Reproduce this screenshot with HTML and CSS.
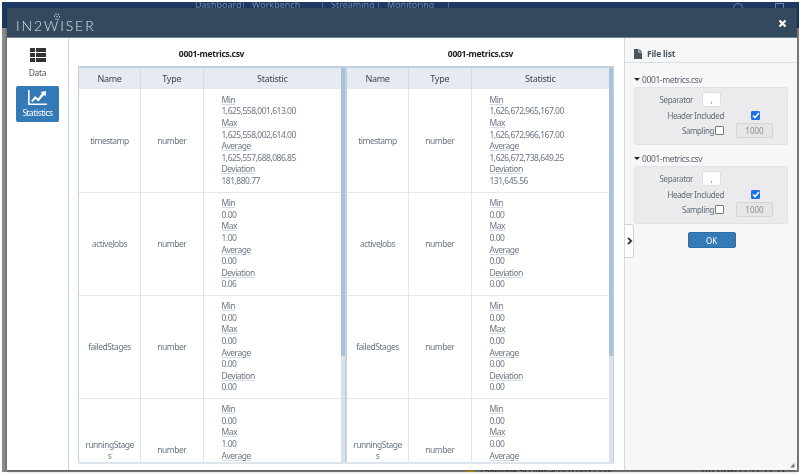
FILE: index.html

```html
<!DOCTYPE html>
<html>
  <head>
    <title>IN2WISER</title>
    <link rel="stylesheet" href="styles.css">
  </head>
  <body>
    <div class="screen">
      <div class="backdrop">
        <div class="top-nav">
          <span>Dashboard</span><span>Workbench</span><span>Streaming</span><span>Monitoring</span>
          <i class="nav-user"></i><i class="nav-box"></i>
        </div>
        <div class="back-body">
          <div class="back-row"><i class="back-folder"></i><span class="back-file">1586489c5cc4e4acdf2c0031.csv</span><span>2021/08/17 17:17:21</span></div>
        </div>
      </div>

      <div class="modal">
        <div class="modal-head">
          <div class="logo">
            <svg class="logo-dots" width="9" height="8" viewBox="0 0 9 8"><circle cx="4" cy="1" r=".7"/><circle cx="6.5" cy="1.5" r=".7"/><circle cx="2.5" cy="3" r=".7"/><circle cx="5" cy="3.5" r=".7"/><circle cx="7.5" cy="4" r=".7"/><circle cx="4" cy="6" r=".7"/><circle cx="6" cy="6.5" r=".7"/></svg>
            IN2WISER
          </div>
          <svg class="close-icon" width="9" height="9" viewBox="0 0 9 9"><path d="M1.5 1.5l6 6M7.5 1.5l-6 6"/></svg>
        </div>

        <div class="modal-body">
          <div class="sidebar">
            <div class="side-item">
              <svg width="16" height="14" viewBox="0 0 16 14"><path d="M0 0h5v4H0zM6 0h10v4H6zM0 5h5v4H0zM6 5h10v4H6zM0 10h5v4H0zM6 10h10v4H6z"/></svg>
              <span>Data</span>
            </div>
            <div class="side-item active">
              <svg width="19" height="15" viewBox="0 0 19 15"><path d="M0 0h1.6v13.4H19V15H0z"/><path d="M3 11l4-5 3 2.6 4-5.3-1.6-1.3L18 1l-.4 5.2-1.6-1.3-5.6 6.6-3-2.6-2.8 3.1z"/></svg>
              <span>Statistics</span>
            </div>
          </div>

          <div class="main">
            <div class="titles">
              <div>0001-metrics.csv</div>
              <div>0001-metrics.csv</div>
            </div>
            <div class="tables">
              <div class="table-wrap">
                <table>
                  <thead>
                    <tr><th>Name</th><th>Type</th><th>Statistic</th></tr>
                  </thead>
                  <tbody>
                    <tr>
                      <td>timestamp</td><td>number</td>
                      <td class="stat"><u>Min</u><br>1,625,558,001,613.00<br><u>Max</u><br>1,625,558,002,614.00<br><u>Average</u><br>1,625,557,688,086.85<br><u>Deviation</u><br>181,880.77</td>
                    </tr>
                    <tr>
                      <td>activeJobs</td><td>number</td>
                      <td class="stat"><u>Min</u><br>0.00<br><u>Max</u><br>1.00<br><u>Average</u><br>0.00<br><u>Deviation</u><br>0.06</td>
                    </tr>
                    <tr>
                      <td>failedStages</td><td>number</td>
                      <td class="stat"><u>Min</u><br>0.00<br><u>Max</u><br>0.00<br><u>Average</u><br>0.00<br><u>Deviation</u><br>0.00</td>
                    </tr>
                    <tr>
                      <td>runningStage<br>s</td><td>number</td>
                      <td class="stat"><u>Min</u><br>0.00<br><u>Max</u><br>1.00<br><u>Average</u><br>0.00<br><u>Deviation</u><br>0.04</td>
                    </tr>
                  </tbody>
                </table>
                <div class="scroll-thumb"></div>
              </div>
              <div class="table-wrap">
                <table>
                  <thead>
                    <tr><th>Name</th><th>Type</th><th>Statistic</th></tr>
                  </thead>
                  <tbody>
                    <tr>
                      <td>timestamp</td><td>number</td>
                      <td class="stat"><u>Min</u><br>1,626,672,965,167.00<br><u>Max</u><br>1,626,672,966,167.00<br><u>Average</u><br>1,626,672,738,649.25<br><u>Deviation</u><br>131,645.56</td>
                    </tr>
                    <tr>
                      <td>activeJobs</td><td>number</td>
                      <td class="stat"><u>Min</u><br>0.00<br><u>Max</u><br>0.00<br><u>Average</u><br>0.00<br><u>Deviation</u><br>0.00</td>
                    </tr>
                    <tr>
                      <td>failedStages</td><td>number</td>
                      <td class="stat"><u>Min</u><br>0.00<br><u>Max</u><br>0.00<br><u>Average</u><br>0.00<br><u>Deviation</u><br>0.00</td>
                    </tr>
                    <tr>
                      <td>runningStage<br>s</td><td>number</td>
                      <td class="stat"><u>Min</u><br>0.00<br><u>Max</u><br>0.00<br><u>Average</u><br>0.00<br><u>Deviation</u><br>0.00</td>
                    </tr>
                  </tbody>
                </table>
                <div class="scroll-thumb"></div>
              </div>
            </div>
          </div>

          <div class="panel">
            <div class="panel-toggle">
              <svg width="6" height="8" viewBox="0 0 6 8"><path d="M1 .8L4.2 4 1 7.2"/></svg>
            </div>
            <div class="panel-head">
              <svg width="8" height="10" viewBox="0 0 8 10"><path d="M0 0h4.5v3.5H8V10H0zM5.3 0L8 2.7H5.3z"/></svg>
              File list
            </div>
            <div class="panel-body">
              <div class="file-name"><i class="caret"></i>0001-metrics.csv</div>
              <div class="file-box">
                <div class="opt-row"><label>Separator</label><span class="sep-input">,</span></div>
                <div class="opt-row header-row"><label>Header Included</label><span class="check on">
                  <svg width="8" height="7" viewBox="0 0 8 7"><path d="M1 3.5l2 2 4-4.5"/></svg>
                </span></div>
                <div class="opt-row sample-row"><label>Sampling</label><span class="check"></span><span class="num-input">1000</span></div>
              </div>
              <div class="file-name"><i class="caret"></i>0001-metrics.csv</div>
              <div class="file-box">
                <div class="opt-row"><label>Separator</label><span class="sep-input">,</span></div>
                <div class="opt-row header-row"><label>Header Included</label><span class="check on">
                  <svg width="8" height="7" viewBox="0 0 8 7"><path d="M1 3.5l2 2 4-4.5"/></svg>
                </span></div>
                <div class="opt-row sample-row"><label>Sampling</label><span class="check"></span><span class="num-input">1000</span></div>
              </div>
              <button type="button" class="ok-btn">OK</button>
            </div>
            <svg class="resize-grip" width="6" height="6" viewBox="0 0 6 6"><path d="M5.5 1v4.5H1z"/></svg>
          </div>
        </div>
      </div>
    </div>
  </body>
</html>
```

FILE: styles.css

```css
body {
  margin: 0;
  background-color: #fff;
  font-family: "Noto Sans", sans-serif;
}

.screen {
  position: relative;
  width: 802px;
  height: 476px;
  overflow: hidden;
  background-color: #fff;
  filter: blur(0.35px);
}

/* page behind the modal */
.backdrop {
  position: absolute;
  left: 2px;
  top: 2px;
  width: 797px;
  height: 470px;
  display: flex;
  flex-direction: column;
  background-color: #8c8c8c;
}

.top-nav {
  height: 26px;
  background-color: #1d3a63;
  color: #6f86a6;
  font-size: 9px;
  line-height: 6px;
  display: flex;
  padding-left: 193px;
  overflow: hidden;
}

.top-nav span {
  box-sizing: border-box;
  padding-left: 8px;
  border-right: 1px solid #4d6589;
}

.top-nav span:nth-child(1) {
  width: 49px;
  padding-left: 0;
}

.top-nav span:nth-child(2) {
  width: 79px;
}

.top-nav span:nth-child(3) {
  width: 56px;
}

.top-nav span:nth-child(4) {
  width: 70px;
}

.nav-user {
  width: 8px;
  height: 8px;
  margin: 1px 0 0 284px;
  border: 1px solid #6f86a6;
  border-radius: 50%;
}

.nav-box {
  width: 7px;
  height: 8px;
  margin: 1px 0 0 32px;
  border: 1px solid #6f86a6;
}

.back-body {
  flex: 1;
  position: relative;
  overflow: hidden;
}

.back-row {
  position: absolute;
  left: 464px;
  bottom: -3px;
  display: flex;
  font-size: 9px;
  line-height: 9px;
  color: #333;
}

.back-folder {
  width: 8px;
  height: 6px;
  margin-right: 5px;
  background-color: #c9a227;
}

.back-file {
  width: 221px;
}

.modal {
  position: absolute;
  left: 7px;
  top: 8px;
  width: 790px;
  height: 462px;
  display: flex;
  flex-direction: column;
  background-color: #fff;
  box-shadow: 0 1px 3px rgba(0, 0, 0, 0.5);
}

.modal-head {
  height: 30px;
  flex: none;
  display: flex;
  align-items: center;
  justify-content: space-between;
  padding: 0 10px 0 9px;
  background-color: #34485e;
  border-bottom: 1px solid #6f8094;
  box-sizing: border-box;
}

.logo {
  position: relative;
  font-family: "Lato", sans-serif;
  font-weight: 300;
  font-size: 14px;
  letter-spacing: 1.9px;
  color: #dce3ea;
  padding-top: 7px;
  line-height: 14px;
}

.logo-dots {
  position: absolute;
  left: 36px;
  top: 1px;
  fill: #dce3ea;
}

.close-icon {
  fill: none;
  stroke: #fff;
  stroke-width: 2.2px;
  margin-top: 1px;
}

.modal-body {
  flex: 1;
  display: flex;
  min-height: 0;
}

.sidebar {
  width: 62px;
  flex: none;
  box-sizing: border-box;
  border-right: 1px solid #c5d2e0;
  padding: 10px 9px 0;
  display: flex;
  flex-direction: column;
  gap: 7px;
}

.side-item {
  height: 31px;
  display: flex;
  flex-direction: column;
  align-items: center;
  justify-content: space-between;
  font-size: 8.5px;
  letter-spacing: -0.3px;
  line-height: 12px;
  color: #555;
  fill: #333;
  border-radius: 2px;
}

.side-item.active {
  height: 36px;
  padding: 4px 0 3px;
  box-sizing: border-box;
  background-color: #337ab7;
  letter-spacing: -0.5px;
  color: #fff;
  fill: #fff;
}

.main {
  width: 555px;
  flex: none;
  box-sizing: border-box;
  padding-left: 9px;
  display: flex;
  flex-direction: column;
}

.titles {
  display: flex;
  gap: 2px;
  height: 28px;
  flex: none;
  align-items: center;
  padding-top: 3px;
  box-sizing: border-box;
  font-size: 8.5px;
  font-weight: 700;
  letter-spacing: -0.3px;
  color: #222;
  text-align: center;
}

.titles div {
  width: 267px;
}

.tables {
  display: flex;
  height: 396px;
  overflow: hidden;
  border-bottom: 2px solid #dfe5ec;
  margin-right: 10px;
}

.table-wrap {
  position: relative;
  flex: 1;
  overflow: hidden;
  border: 1px solid #c3d0de;
  border-bottom: none;
  border-top-width: 2px;
  padding-right: 4px;
  background-color: #dbe1e8;
}

.scroll-thumb {
  position: absolute;
  right: 0;
  top: 0;
  width: 4px;
  height: 288px;
  background-color: #a9c1da;
}

table {
  width: 100%;
  table-layout: fixed;
  border-collapse: collapse;
  background-color: #fff;
  font-size: 8.5px;
  letter-spacing: -0.5px;
  color: #6b7683;
  text-align: center;
}

th:nth-child(1) {
  width: 61px;
}

th:nth-child(2) {
  width: 61.5px;
}

th {
  height: 21px;
  padding: 0;
  background-color: #e6eaf1;
  font-weight: 400;
  font-size: 9px;
  letter-spacing: -0.3px;
  color: #3d4753;
  border-left: 1px solid #d3dbe5;
}

th:first-child,
td:first-child {
  border-left: none;
}

td {
  height: 103px;
  padding: 0 4px;
  box-sizing: border-box;
  border-left: 1px solid #e2e7ee;
  border-bottom: 1px solid #e2e7ee;
  word-break: break-all;
}

.stat {
  padding: 0 0 0 18px;
  text-align: left;
  line-height: 11.6px;
  word-break: normal;
  white-space: nowrap;
}

.stat u {
  text-decoration-color: #d4dbe4;
}

.panel {
  position: relative;
  flex: 1;
  background-color: #f7f7f7;
  border-left: 1px solid #d5dae0;
}

.panel-toggle {
  position: absolute;
  left: 0;
  top: 186px;
  width: 8px;
  height: 32px;
  display: flex;
  align-items: center;
  background-color: #fff;
  border: 1px solid #ccd3db;
  border-left: none;
  border-radius: 0 2px 2px 0;
}

.panel-toggle svg {
  fill: none;
  stroke: #333;
  stroke-width: 1.8px;
  margin-left: 2px;
}

.panel-head {
  height: 25px;
  box-sizing: border-box;
  display: flex;
  align-items: center;
  gap: 5px;
  padding-left: 9px;
  padding-top: 7px;
  font-size: 8.5px;
  font-weight: 700;
  letter-spacing: -0.2px;
  color: #4a5560;
  fill: #4a5560;
  border-bottom: 1px solid #d9dfe6;
}

.panel-body {
  padding: 8px 9px 0;
  display: flex;
  flex-direction: column;
}

.file-name {
  display: flex;
  align-items: center;
  gap: 1px;
  height: 16px;
  font-size: 8.5px;
  letter-spacing: -0.4px;
  color: #5a6470;
}

.caret {
  width: 0;
  height: 0;
  margin-right: 1px;
  border-top: 3px solid #222;
  border-left: 3px solid transparent;
  border-right: 3px solid transparent;
}

.file-box {
  height: 58px;
  box-sizing: border-box;
  margin-bottom: 5px;
  padding-top: 4px;
  background-color: #ebebee;
  border: 1px solid #e2e3e7;
  border-radius: 2px;
  font-size: 8px;
  letter-spacing: -0.4px;
  color: #5f6b78;
}

.opt-row {
  display: flex;
  align-items: center;
  height: 15.5px;
}

.opt-row label {
  width: 58px;
  text-align: right;
  margin-right: 9px;
}

.header-row label {
  width: 89px;
  margin-right: 27px;
}

.sample-row label {
  width: 79px;
  margin-right: 1px;
}

.sep-input {
  width: 17px;
  height: 13px;
  line-height: 13px;
  text-align: center;
  background-color: #fff;
  border: 1px solid #dcdfe4;
  border-radius: 2px;
}

.check {
  width: 7px;
  height: 7px;
  background-color: #fff;
  border: 1px solid #777;
  border-radius: 1px;
}

.check.on {
  display: flex;
  align-items: center;
  justify-content: center;
  background-color: #1a73e8;
  border-color: #1a73e8;
}

.check.on svg {
  flex: none;
  fill: none;
  stroke: #fff;
  stroke-width: 1.6px;
}

.num-input {
  width: 35px;
  height: 13px;
  line-height: 13px;
  margin-left: 12px;
  text-align: center;
  color: #8a8f96;
  background-color: #e6e6e6;
  border: 1px solid #d2d4d8;
  border-radius: 2px;
  letter-spacing: 0;
}

.ok-btn {
  align-self: center;
  width: 48px;
  height: 16px;
  padding: 0;
  margin: 3px 0 0 1px;
  border: 1px solid #2e6da4;
  border-radius: 2px;
  background-color: #337ab7;
  color: #fff;
  font-family: inherit;
  font-size: 8px;
}

.resize-grip {
  position: absolute;
  right: 2px;
  bottom: 2px;
  fill: #777;
}
```
